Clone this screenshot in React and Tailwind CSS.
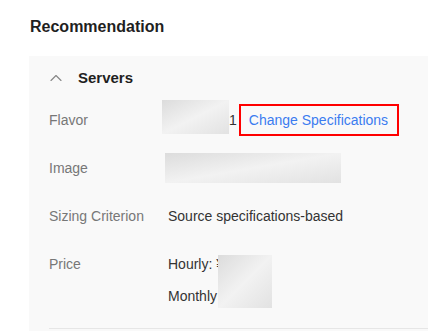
import { ChevronUp } from "lucide-react";

const Blur = ({ className = "" }) => (
  <div
    className={`bg-gradient-to-br from-[#dcdcdc] via-[#f2f2f2] to-[#e2e2e2] ${className}`}
  />
);

const Row = ({ label, children }) => (
  <div className="flex items-center h-[48px]">
    <div className="w-[119px] shrink-0 text-[#777]">{label}</div>
    <div className="flex items-center text-[#333]">{children}</div>
  </div>
);

export default function App() {
  return (
    <div
      className="w-[428px] h-[331px] overflow-hidden bg-white pl-[29px] pt-[17px] text-[14px]"
      style={{ fontFamily: '"Liberation Sans", Arial, sans-serif' }}
    >
      <div className="ml-[1px] text-[16px] leading-[20px] font-bold text-[#1f1f1f]">
        Recommendation
      </div>

      <div className="mt-[19px] bg-[#f9f9f9] pl-[20px] pt-[12px] pb-[20px]">
        {/* Servers header */}
        <div className="flex items-center h-[20px]">
          <ChevronUp className="-ml-[3px] w-[20px] h-[20px] text-[#888]" strokeWidth={1.4} />
          <span className="ml-[12px] text-[15px] font-bold text-[#1f1f1f]">
            Servers
          </span>
        </div>

        <div className="mt-[8px]">
          <Row label="Flavor">
            <Blur className="ml-[-6px] w-[67px] h-[34px] -mt-[6px]" />
            <span>1</span>
            <div className="ml-[2px] h-[32px] w-[160px] border-2 border-[#ff0000] flex items-center pl-[8px]">
              <span className="text-[#3b7cf0] leading-none">
                Change Specifications
              </span>
            </div>
          </Row>

          <Row label="Image">
            <Blur className="ml-[-3px] w-[176px] h-[30px]" />
          </Row>

          <Row label="Sizing Criterion">Source specifications-based</Row>

          <div className="flex pt-[8px] leading-[32px]">
            <div className="w-[119px] shrink-0 text-[#777]">Price</div>
            <div className="relative text-[#333]">
              <div>Hourly: ¥</div>
              <div>Monthly</div>
              <Blur className="absolute left-[50px] top-[7px] w-[54px] h-[53px]" />
            </div>
          </div>

          <div className="mt-[16px] h-px bg-[#e6e6e6]" />
        </div>
      </div>
    </div>
  );
}
